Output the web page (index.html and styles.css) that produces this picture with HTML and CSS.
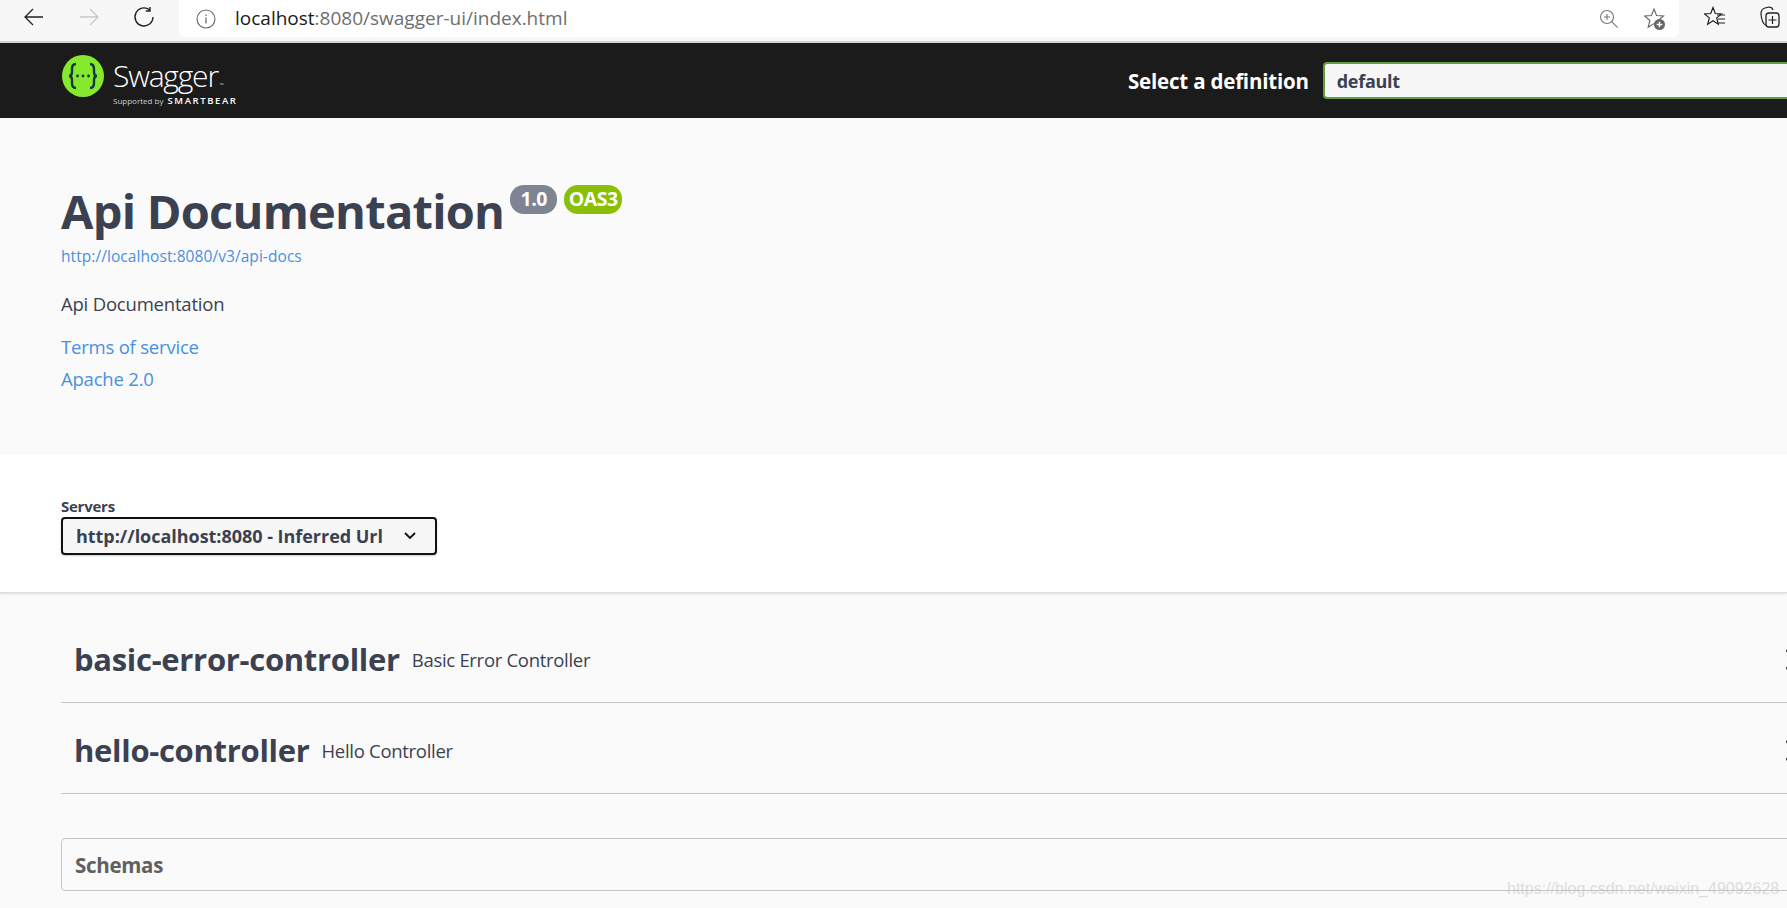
FILE: index.html
```html
<!DOCTYPE html>
<html lang="en">
<head>
<meta charset="utf-8">
<title>Swagger UI</title>
<link rel="stylesheet" href="styles.css">
</head>
<body>
<div class="toolbar">
  <div class="nav">
    <svg class="ico" width="22" height="22" viewBox="0 0 22 22"><path d="M20 11H2M10 3l-8 8 8 8" fill="none" stroke="#222" stroke-width="1.3"/></svg>
    <svg class="ico" width="22" height="22" viewBox="0 0 22 22"><path d="M2 11h18M12 3l8 8-8 8" fill="none" stroke="#c8c8c8" stroke-width="1.3"/></svg>
    <svg class="ico" width="22" height="22" viewBox="0 0 22 22"><path d="M16.5 3.8A9 9 0 1 0 20 11M17 1v4h-4.200" fill="none" stroke="#222" stroke-width="1.4"/></svg>
  </div>
  <div class="address">
    <svg class="info-ico" width="20" height="20" viewBox="0 0 20 20"><circle cx="10" cy="10" r="9" fill="none" stroke="#666" stroke-width="1.100"/><path d="M10 8.500v6M10 5.500v1.400" stroke="#666" stroke-width="1.200"/></svg>
    <span class="url"><span class="host">localhost</span>:8080/swagger-ui/index.html</span>
    <span class="spacer"></span>
    <svg class="addr-ico" width="20" height="20" viewBox="0 0 20 20"><circle cx="8" cy="8" r="6.500" fill="none" stroke="#777" stroke-width="1.100"/><path d="M12.700 12.700l6 6M8 5v6M5 8h6" stroke="#777" stroke-width="1.100"/></svg>
    <svg class="addr-ico star-add" width="22" height="24" viewBox="0 0 22 24"><path d="M10 2l2.500 6.500 7 .5-5.400 4.500 1.700 6.800L10 16.600 4.200 20.300l1.700-6.800L.5 9l7-.5z" fill="none" stroke="#666" stroke-width="1.100"/><circle cx="15.500" cy="17.500" r="5.500" fill="#666"/><path d="M15.500 14.700v5.600M12.700 17.500h5.600" stroke="#fff" stroke-width="1.300"/></svg>
  </div>
  <div class="ext">
    <svg width="22" height="22" viewBox="0 0 22 22"><path d="M9 1.500l2.300 6 6.200.4-4.800 4 1.600 6.300L9 14.700l-5.300 3.500 1.600-6.300-4.800-4 6.200-.4z" fill="none" stroke="#222" stroke-width="1.200"/><path d="M13 9h8M14 13h7M13 17h8" stroke="#222" stroke-width="1.200"/></svg>
    <svg width="22" height="24" viewBox="0 0 22 24"><path d="M7 19.500C4 18 2.500 14 2 8 1.800 5 3 3 6 2l4-1c2 0 3.500 1 4 3" fill="none" stroke="#222" stroke-width="1.200"/><rect x="7" y="7" width="13" height="14" rx="3" fill="none" stroke="#222" stroke-width="1.300"/><path d="M13.500 10v8M9.500 14h8" stroke="#222" stroke-width="1.200"/></svg>
  </div>
</div>

<header class="topbar">
  <div class="brand">
    <svg class="logo" width="42" height="42" viewBox="0 0 42 42"><circle cx="21" cy="21" r="21" fill="#85ea2d"/><path d="M14 9c-3.500 0-4 2-4 5v3c0 2-1 4-3 4 2 0 3 2 3 4v3c0 3 .5 5 4 5M28 9c3.500 0 4 2 4 5v3c0 2 1 4 3 4-2 0-3 2-3 4v3c0 3-.5 5-4 5" fill="none" stroke="#173647" stroke-width="2.400"/><circle cx="15.500" cy="21" r="1.400" fill="#173647"/><circle cx="21" cy="21" r="1.400" fill="#173647"/><circle cx="26.500" cy="21" r="1.400" fill="#173647"/></svg>
    <div class="brand-text">
      <div class="swagger">Swagger<span class="tm">™</span></div>
      <div class="support">Supported by <span class="bear">SMARTBEAR</span></div>
    </div>
  </div>
  <div class="definition">
    <span class="def-label">Select a definition</span>
    <div class="def-select">default</div>
  </div>
</header>

<section class="info">
  <div class="title-row">
    <h1 class="title">Api Documentation</h1>
    <span class="badge badge-version">1.0</span>
    <span class="badge badge-oas">OAS3</span>
  </div>
  <a class="docs-link">http://localhost:8080/v3/api-docs</a>
  <p class="desc">Api Documentation</p>
  <a class="link first">Terms of service</a>
  <a class="link">Apache 2.0</a>
</section>

<section class="servers">
  <div class="servers-label">Servers</div>
  <div class="server-select">
    <span>http://localhost:8080 - Inferred Url</span>
    <svg width="14" height="10" viewBox="0 0 14 10"><path d="M2 2l5 5 5-5" fill="none" stroke="#111" stroke-width="1.800"/></svg>
  </div>
</section>

<main class="ops">
  <div class="tag">
    <h3 class="tag-name">basic-error-controller</h3>
    <span class="tag-desc">Basic Error Controller</span>
    <svg class="arrow" width="20" height="21" viewBox="0 0 20 21"><path d="M0 1l9 9.500-9 9.500" fill="none" stroke="#444" stroke-width="2"/></svg>
  </div>
  <div class="tag">
    <h3 class="tag-name">hello-controller</h3>
    <span class="tag-desc">Hello Controller</span>
    <svg class="arrow" width="20" height="21" viewBox="0 0 20 21"><path d="M0 1l9 9.500-9 9.500" fill="none" stroke="#444" stroke-width="2"/></svg>
  </div>
  <div class="schemas"><span>Schemas</span></div>
</main>

<div class="watermark">https://blog.csdn.net/weixin_49092628</div>
</body>
</html>
```
FILE: styles.css
```css
* { box-sizing: border-box; }
html, body { margin: 0; padding: 0; height: 908px; overflow: hidden; }
body { position: relative; width: 1787px; background: #fafafa; font-family: "Open Sans", "Noto Sans", sans-serif; color: #3b4151; }

.toolbar { height: 43px; display: flex; align-items: flex-start; background: #f7f7f7; border-bottom: 2px solid #d2d2d2; }
.nav { display: flex; gap: 33px; width: 179px; padding: 6px 0 0 23px; }
.ico { display: block; }
.address { flex: none; width: 1500px; height: 37px; display: flex; align-items: center; background: #fff; border-radius: 0 0 6px 6px; padding: 0 13px 0 17px; }
.info-ico { margin-right: 19px; }
.url { font-size: 19px; line-height: 24px; margin-top: -2px; color: #6e6e6e; }
.host { color: #1a1a1a; }
.spacer { flex: 1; }
.addr-ico { margin-right: 25px; }
.star-add { margin-right: 0; }
.ext { flex: 1; display: flex; gap: 33px; padding: 6px 0 0 25px; }

.topbar { height: 75px; background: #1b1b1b; display: flex; align-items: center; justify-content: space-between; padding-left: 62px; }
.brand { display: flex; align-items: flex-start; gap: 9px; }
.logo { display: block; margin-top: 1px; }
.brand-text { color: #fff; }
.swagger { font-size: 30px; line-height: 30px; letter-spacing: -1.2px; font-weight: 300; margin-top: 7px; }
.tm { font-size: 5px; letter-spacing: 0; vertical-align: baseline; margin-left: 2px; }
.support { font-size: 8px; line-height: 13px; color: #cfcfcf; margin-top: -6px; white-space: nowrap; }
.bear { font-size: 9.500px; letter-spacing: 1.600px; color: #fff; margin-left: 2px; font-weight: 600; }
.definition { display: flex; align-items: center; width: 659px; flex: none; gap: 14px; }
.def-label { font-size: 20.500px; font-weight: 700; color: #fff; white-space: nowrap; letter-spacing: -0.2px; }
.def-select { flex: 1; height: 37px; line-height: 34px; padding-left: 12px; background: #f7f7f7; border: 2px solid #62a03f; border-right: 0; border-radius: 4px 0 0 4px; font-size: 18px; font-weight: 700; color: #3b4151; letter-spacing: -0.3px; }

.info { height: 336px; padding: 58px 0 0 61px; background: #fafafa; }
.title-row { display: flex; align-items: flex-start; height: 70px; }
.title { margin: 0; font-size: 47px; line-height: 70px; font-weight: 700; letter-spacing: -0.75px; white-space: nowrap; }
.badge { display: block; height: 29px; line-height: 28px; margin-top: 9px; text-align: center; color: #fff; font-weight: 700; font-size: 19.500px; border-radius: 14px; letter-spacing: -0.5px; }
.badge-version { width: 47px; margin-left: 6px; background: #7d8492; }
.badge-oas { width: 58px; margin-left: 7px; background: #89bf04; }
.docs-link { display: block; font-size: 15.500px; line-height: 20px; margin-top: 0; color: #4990e2; letter-spacing: 0.07px; }
.desc { margin: 26px 0 0; font-size: 18.500px; line-height: 24px; letter-spacing: -0.2px; }
.link { display: block; font-size: 18.500px; line-height: 32px; color: #4990e2; letter-spacing: -0.2px; }
.link.first { margin-top: 15px; }

.servers { height: 139px; padding: 43px 0 0 61px; background: #fff; border-bottom: 1px solid #dcdcdc; box-shadow: 0 1px 2px rgba(0,0,0,.12); position: relative; }
.servers-label { font-size: 15px; line-height: 18px; font-weight: 700; letter-spacing: -0.25px; }
.server-select { width: 376px; height: 38px; margin-top: 2px; padding: 0 18px 0 13px; display: flex; align-items: center; justify-content: space-between; background: #f7f7f7; border: 2px solid #111; border-radius: 4px; font-size: 18px; font-weight: 700; letter-spacing: -0.03px; white-space: nowrap; box-shadow: 0 1px 2px rgba(0,0,0,.2); }

.ops { padding: 0 0 0 61px; }
.tag { height: 91px; margin-top: 19px; padding: 4px 0 0 13px; display: flex; align-items: center; border-bottom: 1px solid #c6c6c6; }
.tag + .tag { margin-top: 0; }
.tag-name { margin: 0; font-size: 31px; line-height: 40px; font-weight: 700; letter-spacing: -0.3px; white-space: nowrap; }
.tag-desc { margin-left: 12px; font-size: 18.500px; letter-spacing: -0.3px; white-space: nowrap; flex: 1; }
.arrow { flex: none; margin-right: -19px; }
.schemas { width: 1760px; height: 53px; margin-top: 44px; padding-left: 13px; display: flex; align-items: center; border: 1px solid #c4c4c4; border-radius: 4px; font-size: 20.500px; font-weight: 700; color: #606060; letter-spacing: -0.3px; }

.watermark { position: absolute; left: 1507px; top: 880px; font-family: "Liberation Sans", sans-serif; font-size: 16px; color: rgba(190,190,190,.5); white-space: nowrap; }
```
